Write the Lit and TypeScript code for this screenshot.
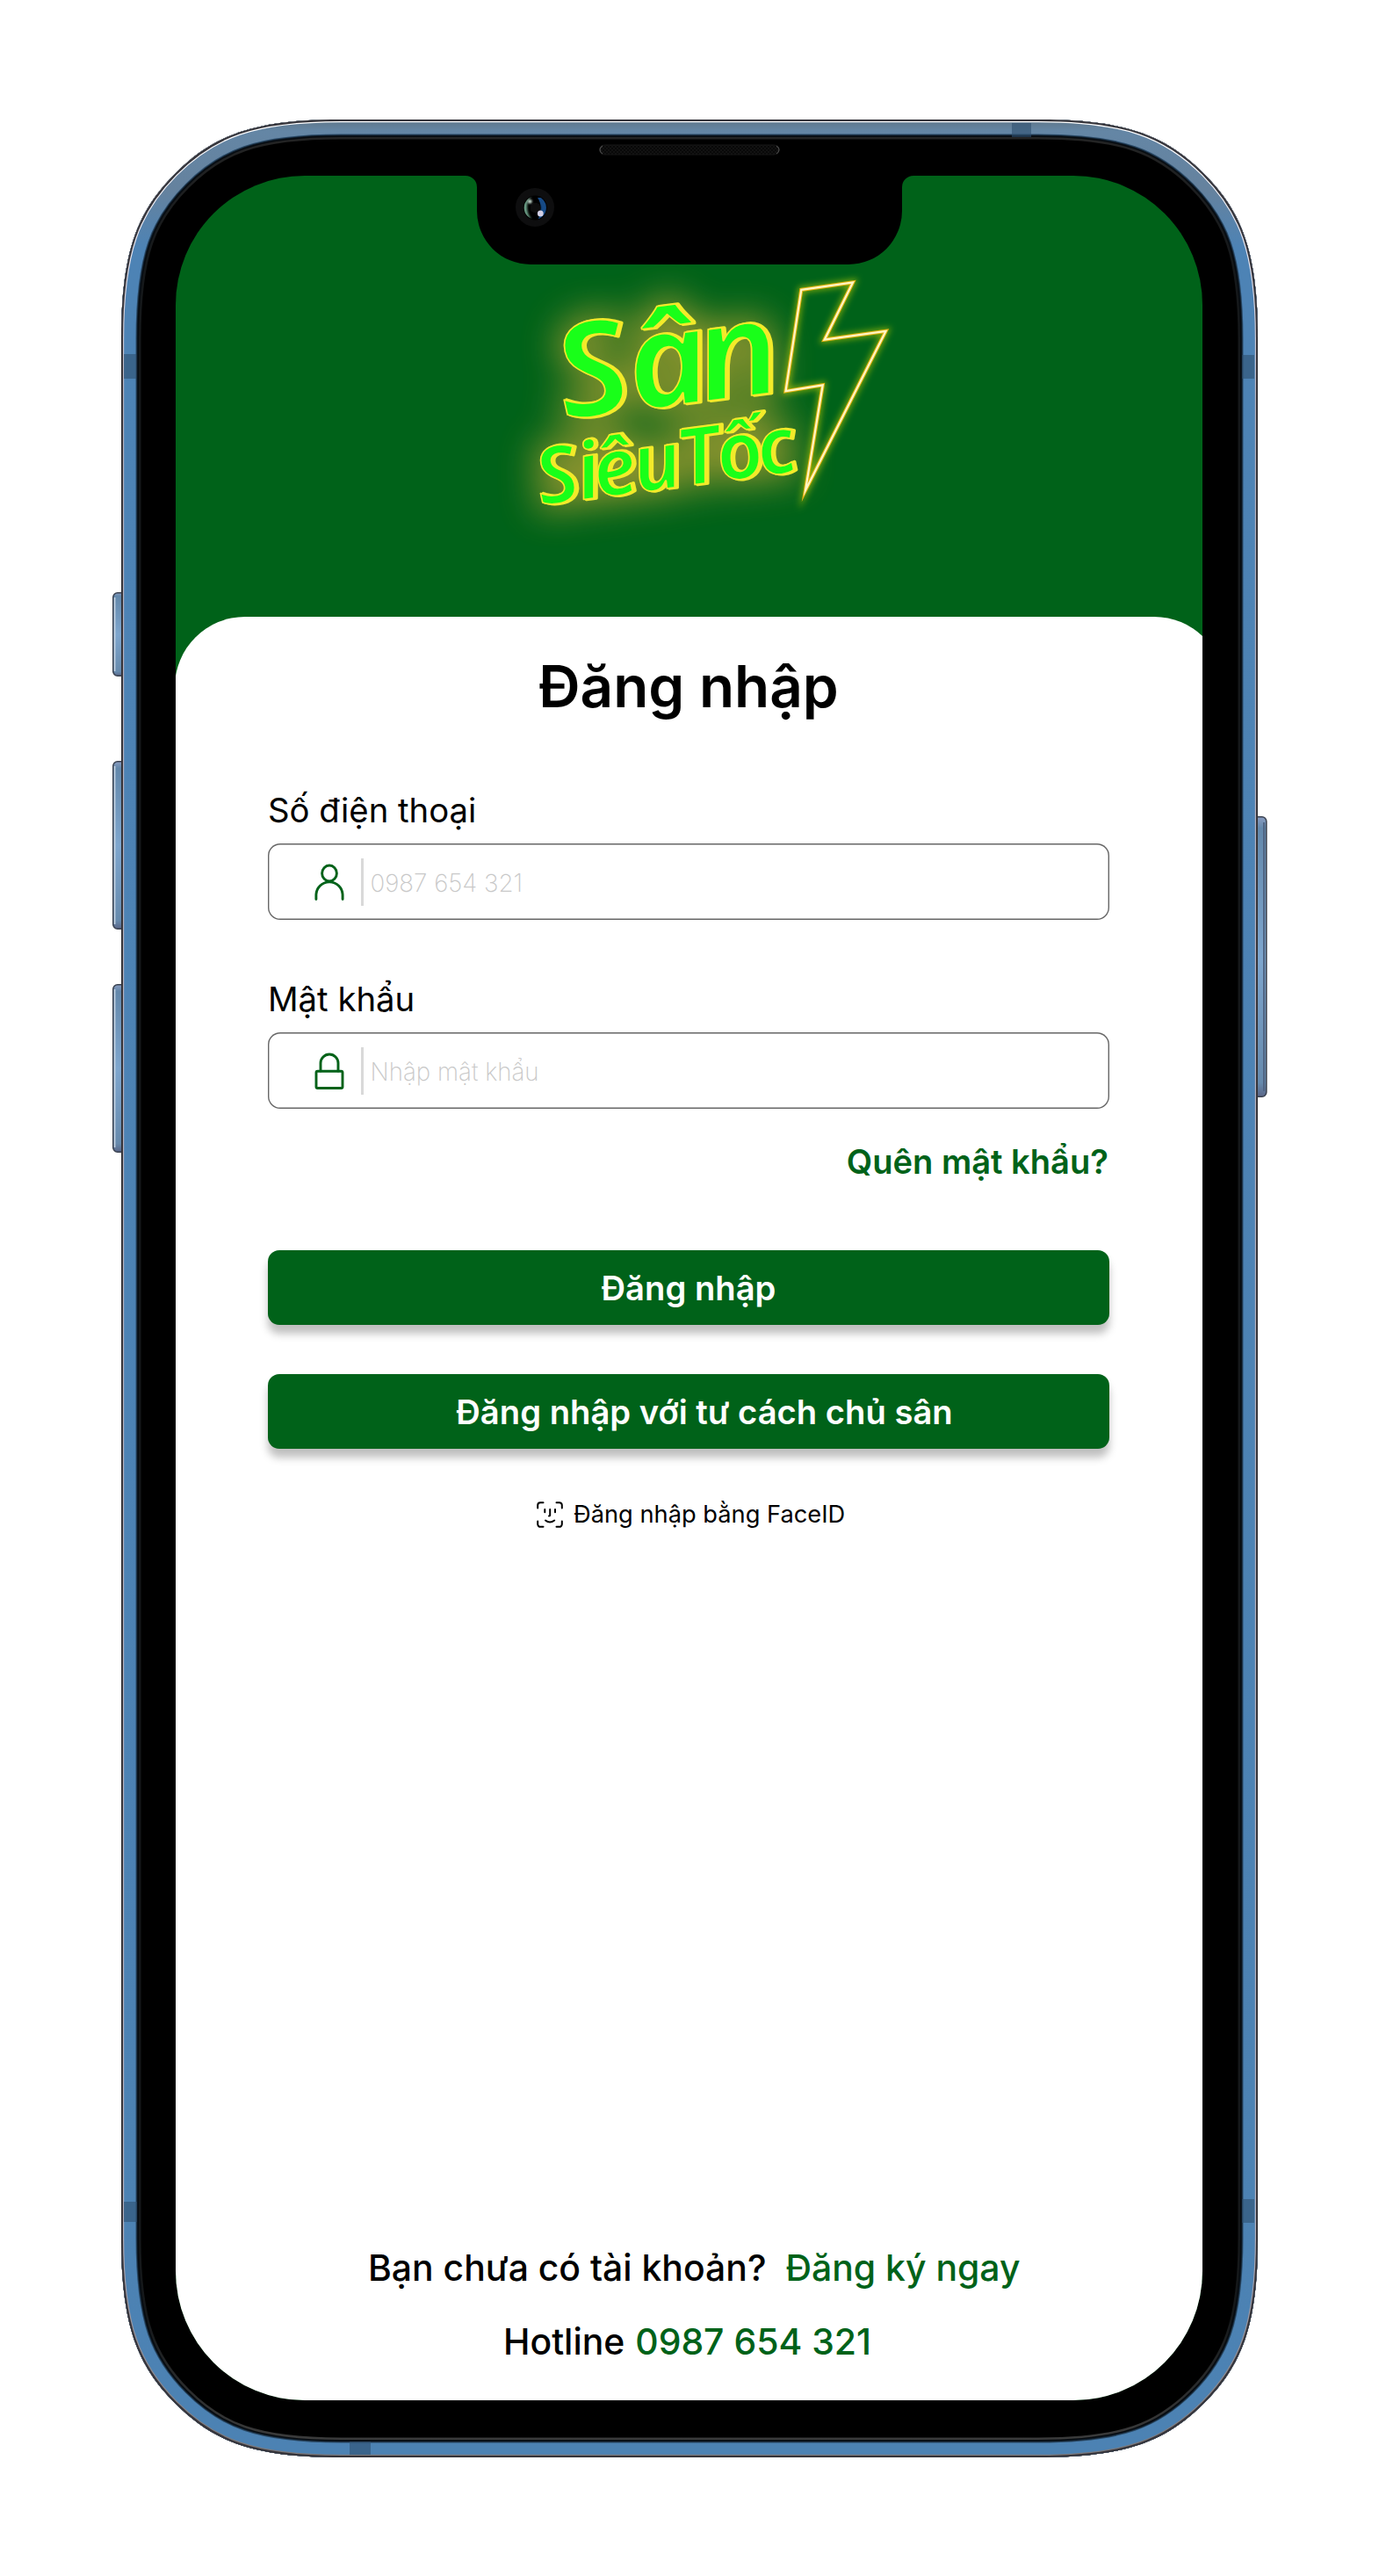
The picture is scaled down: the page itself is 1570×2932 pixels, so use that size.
import { LitElement, html, svg, css } from 'lit';
import { customElement, property } from 'lit/decorators.js';

/* Outline of the handset body, with continuous-curvature corners. */
const L = 138, T = 136, R = 1432, B = 2797;
const BODY = [
  `M${L} ${T + 250}C${L} ${T + 150} ${L + 18.5} ${T + 104.5} ${L + 61.5} ${T + 61.5}`,
  `S${L + 150} ${T} ${L + 250} ${T}`,
  `H${R - 250}C${R - 150} ${T} ${R - 104.5} ${T + 18.5} ${R - 61.5} ${T + 61.5}`,
  `S${R} ${T + 150} ${R} ${T + 250}`,
  `V${B - 250}C${R} ${B - 150} ${R - 18.5} ${B - 104.5} ${R - 61.5} ${B - 61.5}`,
  `S${R - 150} ${B} ${R - 250} ${B}`,
  `H${L + 250}C${L + 150} ${B} ${L + 104.5} ${B - 18.5} ${L + 61.5} ${B - 61.5}`,
  `S${L} ${B - 150} ${L} ${B - 250}Z`,
].join('');

/* Rings drawn from the inside out; each width is twice its depth from the edge. */
const RINGS: [string, number][] = [
  ['url(#inner)', 45], ['#060b10', 40], ['#12212f', 37], ['#2c4d6b', 35],
  ['url(#metal)', 33], ['url(#shine)', 6.4], ['#35343a', 4],
];

@customElement('phone-frame')
export class PhoneFrame extends LitElement {
  static styles = css`
    :host { display: block; }
    svg { display: block; width: 1570px; height: 2932px; }
  `;
  private key(x: number, y: number, h: number) {
    return svg`<rect x=${x + 0.8} y=${y + 0.8} width="20" height=${h - 1.6} rx="5" fill="url(#key)" stroke="#3a4250" stroke-width="1.6"/>`;
  }
  render() {
    return html`<svg viewBox="0 0 1570 2932" aria-hidden="true">
      <defs>
        <linearGradient id="metal" gradientUnits="userSpaceOnUse" x1="0" y1="136" x2="0" y2="2797">
          <stop offset="0" stop-color="#5f7688"/><stop offset=".005" stop-color="#6486a5"/>
          <stop offset=".03" stop-color="#65829e"/><stop offset=".055" stop-color="#4d83b5"/>
          <stop offset="1" stop-color="#4c82b3"/>
        </linearGradient>
        <linearGradient id="inner" gradientUnits="userSpaceOnUse" x1="0" y1="136" x2="0" y2="2797">
          <stop offset="0" stop-color="#262626"/><stop offset=".06" stop-color="#15181a"/>
          <stop offset=".94" stop-color="#15181a"/><stop offset="1" stop-color="#404040"/>
        </linearGradient>
        <linearGradient id="shine" gradientUnits="userSpaceOnUse" x1="0" y1="136" x2="0" y2="2797">
          <stop offset="0" stop-color="#fff"/><stop offset=".06" stop-color="#e4e2ec"/>
          <stop offset=".12" stop-color="#b5b0bd"/><stop offset=".9" stop-color="#b5b0bd"/>
          <stop offset="1" stop-color="#777578"/>
        </linearGradient>
        <linearGradient id="key" x1="0" y1="0" x2="0" y2="1">
          <stop offset="0" stop-color="#8a9cc0"/><stop offset=".04" stop-color="#6388ab"/>
          <stop offset=".5" stop-color="#7ea6ce"/><stop offset=".95" stop-color="#668aad"/>
          <stop offset="1" stop-color="#5a6688"/>
        </linearGradient>
        <clipPath id="body"><path d=${BODY}/></clipPath>
      </defs>
      ${this.key(128, 674, 96)}${this.key(128, 866, 192)}${this.key(128, 1120, 192)}
      ${this.key(1421, 929, 320)}
      <g stroke="#c3d2e2" stroke-width="1.6">
        <path d="M130.6 680v84M130.6 872v180M130.6 1126v180"/>
      </g>
      <path d="M1439 936v306" stroke="#4f6483" stroke-width="2"/>
      <path d=${BODY} fill="#000"/>
      <g clip-path="url(#body)" fill="none">
        ${RINGS.map(([c, w]) => svg`<path d=${BODY} stroke=${c} stroke-width=${w}/>`)}
      </g>
      <g fill="#2e5070" fill-opacity=".6">
        <path d="M141 403h14v28h-14zM1414 404h14v27h-14zM1152 140h22v16h-22z"/>
        <path d="M141 2506h15v23h-15zM1414 2503h14v27h-14zM398 2779h24v15h-24z"/>
      </g>
    </svg>`;
  }
}

@customElement('phone-notch')
export class PhoneNotch extends LitElement {
  static styles = css`
    :host { display: block; }
    svg { display: block; width: 510px; height: 145px; }
  `;
  render() {
    return html`<svg viewBox="530 157 510 145" aria-hidden="true">
      <defs>
        <pattern id="mesh" width="4" height="4" patternUnits="userSpaceOnUse">
          <rect width="4" height="4" fill="#121212"/><path d="M0 0h2v2H0zM2 2h2v2H2z" fill="#080808"/>
        </pattern>
        <clipPath id="lens"><ellipse cx="609.3" cy="236.5" rx="12.6" ry="13.2"/></clipPath>
        <filter id="soft" x="-50%" y="-50%" width="200%" height="200%"><feGaussianBlur stdDeviation="1"/></filter>
      </defs>
      <path d="M530 190V200A13 13 0 0 1 543 213V240A61 61 0 0 0 604 301H966A61 61 0 0 0 1027 240V213A13 13 0 0 1 1040 200V190Z" fill="#000"/>
      <rect x="682.7" y="165" width="204" height="11" rx="5.5" fill="url(#mesh)" stroke="#161616"/>
      <path d="M686 166q-3 2-3 4.500t3 4.500M884 166q3 2 3 4.500t-3 4.500" fill="none" stroke="#484848" stroke-width="1.300"/>
      <circle cx="609" cy="236" r="22" fill="#0e0e0f"/>
      <ellipse cx="609.300" cy="236.500" rx="13.500" ry="14" fill="#000"/>
      <g clip-path="url(#lens)">
        <path d="M606 222c-6 4-9 18-1 27l-12-2v-24z" fill="#6a9c85" filter="url(#soft)"/>
        <path d="M612 225c5 7 4 15 1 24h12v-24z" fill="#164a86"/>
        <circle cx="609.500" cy="236.500" r="6" fill="#0b0b0c" filter="url(#soft)"/>
        <circle cx="603.300" cy="229.300" r="2.400" fill="#c9dfd3" filter="url(#soft)"/>
        <ellipse cx="615.300" cy="243" rx="3.400" ry="3.600" fill="#d3d0e6"/>
      </g>
    </svg>`;
  }
}

@customElement('brand-logo')
export class BrandLogo extends LitElement {
  static styles = css`
    :host { display: block; }
    svg { display: block; width: 480px; height: 320px; overflow: visible; }
    text { font-family: 'Noto Sans', 'Open Sans', sans-serif; font-style: italic; font-weight: 600; stroke-linejoin: round; }
    .big { font-size: 150px; }
    .small { font-size: 91px; }
    .glow { fill: #dbb03a; stroke: #dbb03a; stroke-width: 16px; }
    .edge { fill: #f3ea2a; stroke: #f3ea2a; stroke-width: 3.500px; }
    .face { fill: #19ff19; stroke: #f3ea2a; stroke-width: 1.600px; }
  `;
  /* The italic cut has the single-storey "a"; skewX stands it upright again. */
  private words(cls: string, dx = 0, hidden = true) {
    return svg`<g aria-hidden=${hidden ? 'true' : 'false'}>
      <text class="big ${cls}" x="2 79.100 154.800" transform="translate(${82 + dx} 187) skewY(-7.2) scale(1.04 1) skewX(12)">Sân</text>
      <text class="small ${cls}" x="0 46 64.700 110 162 205 251" transform="translate(${56.5 + dx} 284.700) skewY(-7.5) skewX(12)">SiêuTốc</text>
    </g>`;
  }
  render() {
    const bolt = 'M352.300 39.800L411 31.500L378.700 96.700L448.500 87L357 268L376.700 148.300L334.500 155.200Z';
    return html`<svg viewBox="0 0 480 320">
      <defs>
        <filter id="halo" filterUnits="userSpaceOnUse" x="-60" y="-40" width="600" height="440"><feGaussianBlur stdDeviation="20"/></filter>
        <filter id="spark" filterUnits="userSpaceOnUse" x="280" y="0" width="220" height="320"><feGaussianBlur stdDeviation="3.500"/></filter>
      </defs>
      <g filter="url(#halo)" opacity=".64">${this.words('glow')}</g>
      ${this.words('edge', 3)}
      ${this.words('face', 0, false)}
      <g fill="none" stroke-linejoin="miter" stroke-miterlimit="8">
        <path d=${bolt} stroke="#c9d400" stroke-opacity=".6" stroke-width="7" filter="url(#spark)"/>
        <path d=${bolt} stroke="#e5b312" stroke-width="4.200"/>
        <path d=${bolt} stroke="#fff6c4" stroke-width="2.200"/>
      </g>
    </svg>`;
  }
}

const ICONS = {
  user: svg`<ellipse cx="18" cy="12" rx="8.400" ry="9"/><path d="M2.900 41.500V37a15.100 15.100 0 0 1 30.200 0V41.500"/>`,
  lock: svg`<rect x="3" y="22.200" width="30" height="19.300" rx="1.500"/><path d="M8 22V13a10 10 0 0 1 20 0v9"/>`,
};

@customElement('form-field')
export class FormField extends LitElement {
  static styles = css`
    :host { display: flex; flex-direction: column; gap: 15px; }
    .label { font-size: 38.300px; line-height: 46px; color: #000; }
    .box {
      display: flex; align-items: center; box-sizing: border-box; height: 87px;
      padding-left: 52px; border-radius: 14px; background: #fff;
      box-shadow: inset 0 0 0 1.400px #666;
    }
    svg { width: 36px; height: 44px; margin-left: -.5px; fill: none; stroke: #006219; stroke-width: 2.900px; stroke-linecap: round; }
    .rule { width: 2.500px; height: 54px; margin-left: 18.500px; background: #d9d9d9; }
    .hint { padding: 3px 0 0 8px; font-size: 27.700px; font-weight: 200; line-height: 34px; color: #c8c8c8; }
  `;
  @property() label = '';
  @property() hint = '';
  @property() icon: keyof typeof ICONS = 'user';
  render() {
    return html`
      <span class="label">${this.label}</span>
      <div class="box">
        <svg viewBox="0 0 36 44" aria-hidden="true">${ICONS[this.icon]}</svg>
        <span class="rule"></span>
        <span class="hint">${this.hint}</span>
      </div>`;
  }
}

@customElement('app-root')
export class AppRoot extends LitElement {
  static styles = css`
    :host { display: block; width: 1570px; height: 2932px; overflow: hidden; background: #fff; }
    .stage {
      position: relative; box-sizing: border-box; width: 1570px; height: 2932px; padding: 200px;
      font-family: Inter, 'Liberation Sans', sans-serif; color: #000;
    }
    .frame { position: absolute; left: 0; top: 0; }
    .notch { position: absolute; left: 530px; top: 157px; }
    .screen {
      position: relative; display: flex; flex-direction: column; width: 1169px; height: 2532px;
      overflow: hidden; border-radius: 147px; background: #006219;
    }
    .header { display: flex; flex: none; box-sizing: border-box; height: 502px; padding: 90px 0 0 360px; }
    .sheet {
      display: flex; flex: 1; flex-direction: column; box-sizing: border-box; width: 1195px;
      margin-left: -1px; padding: 39px 131px 42px 106px; border-radius: 80px 80px 0 0; background: #fff;
    }
    .title { margin: 0 0 78px; font-size: 65.600px; font-weight: 600; line-height: 80px; text-align: center; }
    .fields { display: flex; flex-direction: column; gap: 67px; }
    .forgot {
      align-self: flex-end; margin: 37px 1px 78px 0; font-size: 38.100px; font-weight: 600;
      line-height: 46px; color: #006219;
    }
    .actions { display: flex; flex-direction: column; gap: 56px; }
    .btn {
      height: 85px; padding: 1px 0 0; border: 0; border-radius: 13px; background: #006219; color: #fff;
      box-shadow: 0 10px 10px rgba(0, 0, 0, .25); font: 600 38.200px/84px Inter, 'Liberation Sans', sans-serif;
      text-align: center;
    }
    .owner { padding-left: 36px; }
    .face { display: flex; align-items: center; gap: 12px; margin-top: 57px; padding-left: 306px; font-size: 27.250px; line-height: 34px; }
    .face span { padding-top: 1px; }
    .face svg { width: 30px; height: 30px; fill: none; stroke: #000; stroke-width: 2px; stroke-linecap: round; }
    .footer { display: flex; flex-direction: column; gap: 34px; margin-top: auto; font-size: 40.900px; font-weight: 500; line-height: 50px; white-space: nowrap; }
    .signup { display: flex; gap: 22px; padding-left: 114px; }
    .hotline { padding-left: 268px; }
    .hotline .green { margin-left: 1px; }
    .green { color: #006219; }
  `;
  render() {
    return html`
      <div class="stage">
        <phone-frame class="frame"></phone-frame>
        <main class="screen">
          <div class="header"><brand-logo></brand-logo></div>
          <section class="sheet">
            <h1 class="title">Đăng nhập</h1>
            <div class="fields">
              <form-field label="Số điện thoại" hint="0987 654 321" icon="user"></form-field>
              <form-field label="Mật khẩu" hint="Nhập mật khẩu" icon="lock"></form-field>
            </div>
            <a class="forgot">Quên mật khẩu?</a>
            <div class="actions">
              <button class="btn">Đăng nhập</button>
              <button class="btn owner">Đăng nhập với tư cách chủ sân</button>
            </div>
            <div class="face">
              <svg viewBox="0 0 30 30" aria-hidden="true">
                <path d="M1.200 7.500V4.200a3 3 0 0 1 3-3h3.300M22.500 1.200h3.300a3 3 0 0 1 3 3v3.300M28.800 22.500v3.300a3 3 0 0 1-3 3h-3.300M7.500 28.800H4.200a3 3 0 0 1-3-3v-3.300"/>
                <path d="M9.300 9v3.200M21 9v3.200M15.200 9v6.500q0 1-1.200 1M10 21.500q5 4 10.200 0"/>
              </svg>
              <span>Đăng nhập bằng FaceID</span>
            </div>
            <div class="footer">
              <div class="signup"><span>Bạn chưa có tài khoản?</span><span class="green">Đăng ký ngay</span></div>
              <div class="hotline">Hotline <span class="green">0987 654 321</span></div>
            </div>
          </section>
        </main>
        <phone-notch class="notch"></phone-notch>
      </div>`;
  }
}
